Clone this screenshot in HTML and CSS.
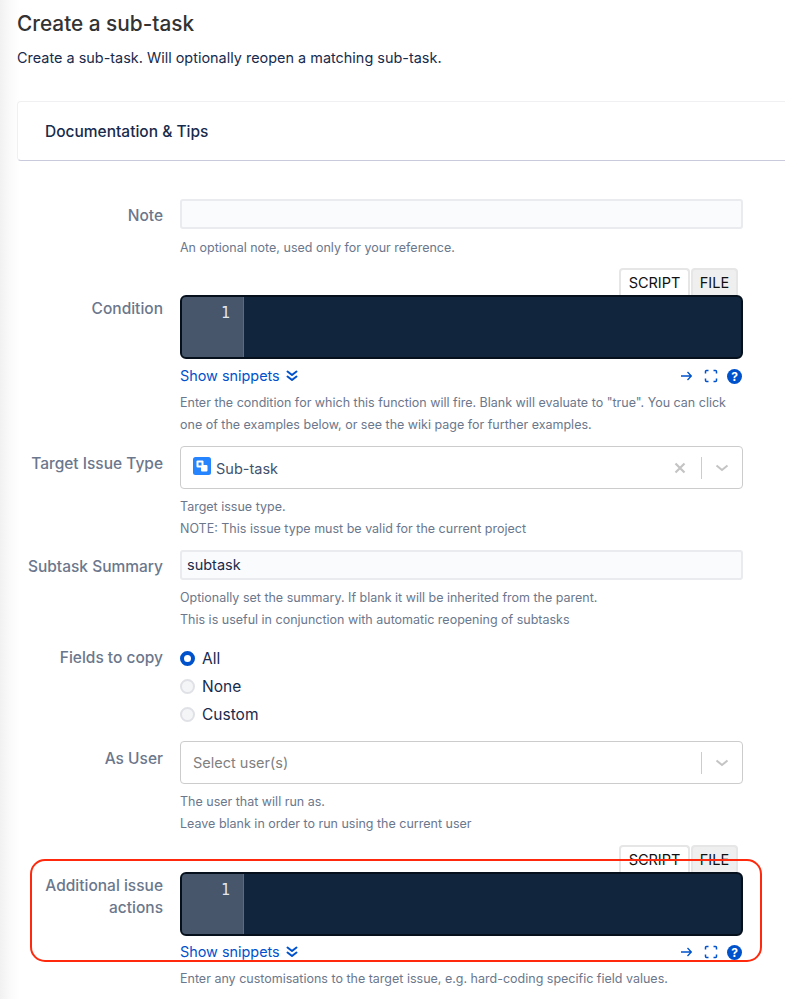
FILE: index.html
```html
<!DOCTYPE html>
<html lang="en">
<head>
<meta charset="utf-8">
<title>Create a sub-task</title>
<link rel="stylesheet" href="styles.css">
</head>
<body>
<main class="page">
  <h1 class="title">Create a sub-task</h1>
  <p class="intro">Create a sub-task. Will optionally reopen a matching sub-task.</p>
  <section class="card"><h2 class="card-title">Documentation &amp; Tips</h2></section>

  <div class="row row-note">
    <label class="label">Note</label>
    <div class="field">
      <div class="input"></div>
      <p class="help first">An optional note, used only for your reference.</p>
    </div>
  </div>

  <div class="row row-condition">
    <label class="label label-editor">Condition</label>
    <div class="field">
      <div class="tabs"><span class="tab tab-on">SCRIPT</span><span class="tab tab-off">FILE</span></div>
      <div class="editor"><div class="gutter">1</div></div>
      <div class="tools">
        <a class="snippets">Show snippets<svg class="dbl" viewBox="0 0 12 12" width="12" height="12"><path d="M1.500 1.500 6 5l4.500-3.500M1.500 6.500 6 10l4.500-3.500" fill="none" stroke="#0052cc" stroke-width="2" stroke-linecap="round" stroke-linejoin="round"/></svg></a>
        <div class="tool-icons">
          <svg class="arrow" viewBox="0 0 12 12" width="12" height="12"><path d="M1 6h10M7.500 2l3.800 4-3.800 4" fill="none" stroke="#0052cc" stroke-width="1.300"/></svg>
          <svg viewBox="0 0 14 14" width="14" height="14"><path d="M1.500 4.500v-2a1 1 0 0 1 1-1h2M9.500 1.500h2a1 1 0 0 1 1 1v2M12.500 9.500v2a1 1 0 0 1-1 1h-2M4.500 12.500h-2a1 1 0 0 1-1-1v-2" fill="none" stroke="#0052cc" stroke-width="1.500"/></svg>
          <span class="q">?</span>
        </div>
      </div>
      <p class="help help-tools">Enter the condition for which this function will fire. Blank will evaluate to "true". You can click one of the examples below, or see the wiki page for further examples.</p>
    </div>
  </div>

  <div class="row row-type">
    <label class="label">Target Issue Type</label>
    <div class="field">
      <div class="select">
        <span class="type-icon"><svg viewBox="0 0 18 18" width="18" height="18"><rect width="18" height="18" rx="2.500" fill="#2684ff"/><rect x="8" y="8" width="6.500" height="6.500" rx="1" fill="#fff"/><rect x="3.500" y="3.500" width="7" height="7" rx="1" fill="#fff"/><rect x="5.500" y="5.500" width="3" height="3" fill="#2684ff"/></svg></span>
        <span class="value">Sub-task</span>
        <svg class="clear" viewBox="0 0 12 12" width="12" height="12"><path d="M1.500 1.500l9 9M10.500 1.500l-9 9" stroke="#c4c4c4" stroke-width="2.200" fill="none"/></svg>
        <span class="sep"></span>
        <svg class="chev" viewBox="0 0 14 8" width="14" height="8"><path d="M1.500 1.500 7 6l5.500-4.500" stroke="#c4c4c4" stroke-width="2" fill="none"/></svg>
      </div>
      <p class="help first">Target issue type.</p>
      <p class="help">NOTE: This issue type must be valid for the current project</p>
    </div>
  </div>

  <div class="row row-summary">
    <label class="label">Subtask Summary</label>
    <div class="field">
      <div class="input input-text">subtask</div>
      <p class="help first">Optionally set the summary. If blank it will be inherited from the parent.</p>
      <p class="help">This is useful in conjunction with automatic reopening of subtasks</p>
    </div>
  </div>

  <div class="row row-radios">
    <label class="label">Fields to copy</label>
    <div class="field">
      <div class="radio"><span class="dot dot-on"></span>All</div>
      <div class="radio"><span class="dot"></span>None</div>
      <div class="radio"><span class="dot"></span>Custom</div>
    </div>
  </div>

  <div class="row row-user">
    <label class="label">As User</label>
    <div class="field">
      <div class="select">
        <span class="placeholder">Select user(s)</span>
        <span class="sep"></span>
        <svg class="chev" viewBox="0 0 14 8" width="14" height="8"><path d="M1.500 1.500 7 6l5.500-4.500" stroke="#c4c4c4" stroke-width="2" fill="none"/></svg>
      </div>
      <p class="help first">The user that will run as.</p>
      <p class="help">Leave blank in order to run using the current user</p>
    </div>
  </div>

  <div class="row row-actions">
    <label class="label label-editor">Additional issue actions</label>
    <div class="field">
      <div class="tabs"><span class="tab tab-on">SCRIPT</span><span class="tab tab-off">FILE</span></div>
      <div class="editor"><div class="gutter">1</div></div>
      <div class="tools tools-tight">
        <a class="snippets">Show snippets<svg class="dbl" viewBox="0 0 12 12" width="12" height="12"><path d="M1.500 1.500 6 5l4.500-3.500M1.500 6.500 6 10l4.500-3.500" fill="none" stroke="#0052cc" stroke-width="2" stroke-linecap="round" stroke-linejoin="round"/></svg></a>
        <div class="tool-icons">
          <svg class="arrow" viewBox="0 0 12 12" width="12" height="12"><path d="M1 6h10M7.500 2l3.800 4-3.800 4" fill="none" stroke="#0052cc" stroke-width="1.300"/></svg>
          <svg viewBox="0 0 14 14" width="14" height="14"><path d="M1.500 4.500v-2a1 1 0 0 1 1-1h2M9.500 1.500h2a1 1 0 0 1 1 1v2M12.500 9.500v2a1 1 0 0 1-1 1h-2M4.500 12.500h-2a1 1 0 0 1-1-1v-2" fill="none" stroke="#0052cc" stroke-width="1.500"/></svg>
          <span class="q">?</span>
        </div>
      </div>
      <p class="help help-last">Enter any customisations to the target issue, e.g. hard-coding specific field values.</p>
    </div>
    <div class="highlight"></div>
  </div>
</main>
</body>
</html>
```
FILE: styles.css
```css
* { box-sizing: border-box; }
html, body { margin: 0; padding: 0; height: 999px; overflow: hidden; }
body {
  background: linear-gradient(to right, #f1f1f1 0, #fafafa 10px, #fff 20px);
  font-family: Inter, "Liberation Sans", sans-serif;
  color: #172b4d;
}
.page { width: 785px; height: 999px; padding: 0 0 0 17px; overflow: hidden; }
.title { margin: 0; padding-top: 11px; font-size: 20.800px; line-height: 26px; font-weight: 500; color: #333; }
.intro { margin: 10px 0 0; font-size: 14.450px; line-height: 22px; color: #172b4d; }
.card {
  margin: 32px -40px 0 0;
  height: 60px;
  padding: 0 27px;
  display: flex;
  align-items: center;
  background: #fff;
  border: 1px solid #f0f0f3;
  border-bottom: 1px solid #c9cbdc;
  border-radius: 4px;
}
.card-title { margin: 0; font-size: 15.500px; font-weight: 500; color: #172b4d; }
.row { position: relative; display: grid; grid-template-columns: 146px 563px; column-gap: 17px; }
.label { text-align: right; font-size: 15.500px; line-height: 22px; font-weight: 500; color: #6b778c; padding-top: 6px; }
.label-editor { padding-top: 30px; }
.input {
  height: 30px;
  background: #fafbfc;
  border: 2px solid #e9ebef;
  border-radius: 3px;
  padding: 0 5px;
  font-size: 14.500px;
  line-height: 26px;
  color: #172b4d;
}
.help { margin: 0; font-size: 12.500px; line-height: 22px; color: #6b778c; }
.first { margin-top: 7px; }
.row-note { margin-top: 38px; }
.row-note .first { margin-top: 8px; }
.row-condition { margin-top: 9px; }
.row-type { margin-top: 10px; }
.row-summary { margin-top: 10px; }
.row-radios { margin-top: 13px; }
.row-user { margin-top: 13px; }
.row-actions { margin-top: 10px; }
.row-type .label, .row-user .label { padding-top: 7px; }
.row-radios .label { padding-top: 3px; }
.tabs { display: flex; justify-content: flex-end; height: 27px; padding-right: 5px; }
.tab {
  height: 27px;
  font-size: 14.500px;
  line-height: 26px;
  color: #111;
  border: 2px solid #e6e6e6;
  border-bottom: 0;
  border-radius: 4px 4px 0 0;
  text-align: center;
}
.tab-on { width: 71px; background: #fff; }
.tab-off { width: 47px; background: #efefef; margin-left: 1px; }
.editor {
  height: 64px;
  background: #11263c;
  border: 2px solid #05101c;
  border-radius: 6px;
  overflow: hidden;
}
.gutter {
  width: 62px;
  height: 100%;
  background: #47566a;
  border-right: 1px solid #5d6b7e;
  color: #e4e8ee;
  font-family: "DejaVu Sans Mono", monospace;
  font-size: 15px;
  line-height: 19px;
  text-align: right;
  padding-right: 13px;
  padding-top: 7px;
}
.tools { display: flex; align-items: center; justify-content: space-between; height: 22px; margin-top: 6px; padding-right: 1px; }
.tools-tight { margin-top: 5px; }
.snippets { display: flex; align-items: center; gap: 6px; font-size: 14.400px; line-height: 22px; color: #0052cc; }
.tool-icons { display: flex; align-items: center; gap: 9px; }
.arrow { margin-right: 3px; }
.q {
  width: 15px;
  height: 15px;
  border-radius: 50%;
  background: #0052cc;
  color: #fff;
  font-size: 12px;
  line-height: 15px;
  font-weight: 700;
  text-align: center;
}
.help-tools { margin-top: 5px; }
.help-last { margin-top: 5px; }
.select {
  height: 43px;
  display: flex;
  align-items: center;
  padding: 0 13px 0 12px;
  border: 1px solid #cccccc;
  border-radius: 4px;
  background: #fff;
  font-size: 14.500px;
}
.type-icon { display: flex; margin: 0 5px 4px 0; }
.value { flex: 1; color: #42526e; padding-top: 2px; }
.placeholder { flex: 1; color: #808080; }
.clear { margin-right: 15px; }
.sep { width: 1px; height: 22px; background: #cccccc; margin-right: 13px; }
.radio { display: flex; align-items: center; gap: 7px; height: 28px; font-size: 15.500px; color: #172b4d; }
.dot { width: 15px; height: 15px; border-radius: 50%; background: #f4f5f7; border: 2px solid #dfe1e6; }
.dot-on { background: #fff; border: 4.500px solid #0052cc; }
.highlight {
  position: absolute;
  left: 13px;
  right: 23px;
  top: 14px;
  height: 103px;
  border: 2.500px solid #ff2a0d;
  border-radius: 15px;
  pointer-events: none;
}
```
